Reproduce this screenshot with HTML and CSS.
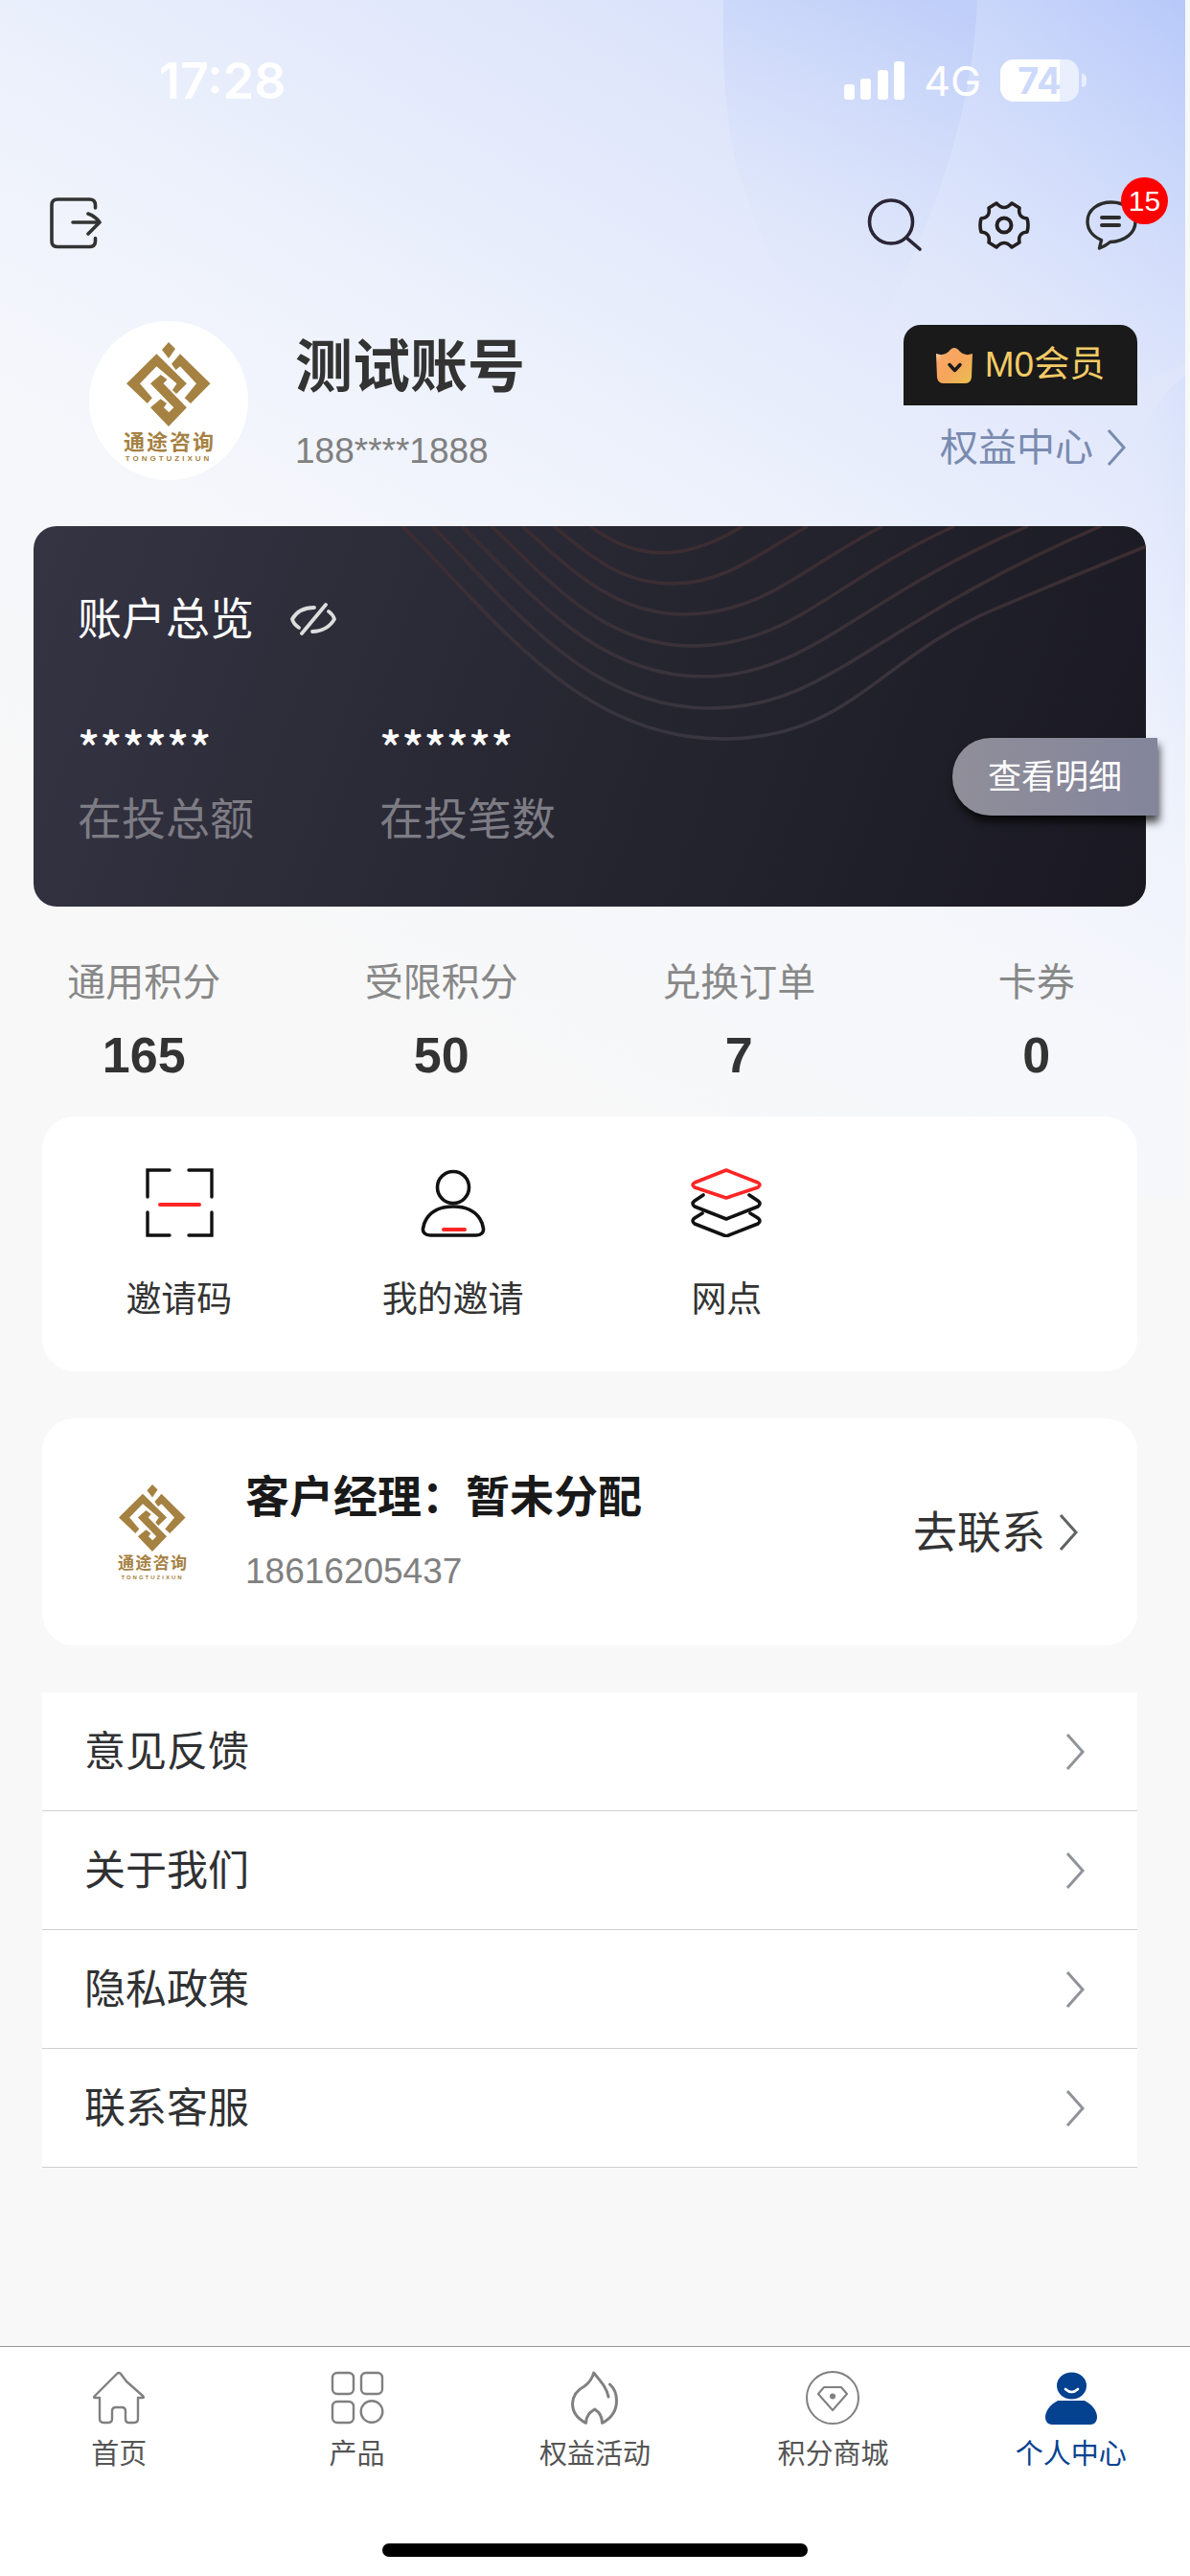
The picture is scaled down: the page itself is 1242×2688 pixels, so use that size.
FILE: index.html
```html
<!DOCTYPE html>
<html lang="zh-CN">
<head>
  <meta charset="UTF-8">
  <meta name="viewport" content="width=device-width, initial-scale=1">
  <title>个人中心</title>
  <link rel="stylesheet" href="styles.css">
</head>
<body>
<svg class="defs" width="0" height="0" aria-hidden="true">
  <defs>
    <symbol id="emblem" viewBox="0 0 88 88">
      <path d="M44 0 51 7 44 17 37 8Z"/>
      <path d="M31.4 12.3 62.9 43.3 52 54 48 50 52.5 43.3 31.4 25.3 14 43.3 26.8 58.3 21.8 64 0 43.3Z"/>
      <path d="M35.7 34 42.5 39 38.6 43.3 62.9 68.3 44 88 25 68.3 35.7 59.3 42 64 39 68.3 44.3 73.3 49.3 68.3 25 43.3Z"/>
      <path d="M56 12.3 87.5 43.3 67 64 60.7 58.3 73 43.3 56 25.3 51.5 29 47 22.7Z"/>
    </symbol>
    <symbol id="chevron" viewBox="0 0 20 38">
      <path d="M2 1 18 19 2 37" fill="none" stroke="currentColor" stroke-width="3"/>
    </symbol>
  </defs>
</svg>

<svg class="backdrop" viewBox="0 0 1237 1250" preserveAspectRatio="none" aria-hidden="true">
  <defs>
    <linearGradient id="lens" x1="0.8" y1="0" x2="0.5" y2="1">
      <stop offset="0" stop-color="#a9bdf6" stop-opacity=".45"/>
      <stop offset="1" stop-color="#dde7fb" stop-opacity="0"/>
    </linearGradient>
    <linearGradient id="corner" x1="1" y1="0" x2="0.3" y2="0.9">
      <stop offset="0" stop-color="#a3b9f8" stop-opacity=".5"/>
      <stop offset="1" stop-color="#e6edfd" stop-opacity="0"/>
    </linearGradient>
    <linearGradient id="side" x1="1" y1="0" x2="0.4" y2="0.6">
      <stop offset="0" stop-color="#cfdcfc" stop-opacity=".5"/>
      <stop offset="1" stop-color="#e6edfd" stop-opacity="0"/>
    </linearGradient>
  </defs>
  <path d="M755 0C753 80 760 160 778 200 800 280 850 340 900 380 960 260 1015 140 1020 0Z" fill="url(#lens)"/>
  <path d="M1020 0C1015 140 965 270 880 400 1000 440 1120 430 1237 380V0Z" fill="url(#corner)"/>
  <path d="M1237 392C1205 415 1190 450 1160 520 1150 700 1190 800 1237 860Z" fill="url(#side)"/>
</svg>

<header class="status-bar">
  <span class="clock">17:28</span>
  <div class="status-right">
    <svg width="63" height="40" viewBox="0 0 63 40" fill="#fff">
      <rect x="0" y="24" width="11" height="16" rx="3"/>
      <rect x="17" y="18" width="11" height="22" rx="3"/>
      <rect x="35" y="9" width="11" height="31" rx="3"/>
      <rect x="52" y="0" width="11" height="40" rx="3"/>
    </svg>
    <span class="network">4G</span>
    <div class="battery"><span>74</span></div>
  </div>
</header>

<div class="toolbar">
  <button class="icon-btn" aria-label="退出">
    <svg width="54" height="54" viewBox="0 0 54 54" fill="none" stroke="#333" stroke-width="3.6" stroke-linecap="round" stroke-linejoin="round">
      <path d="M47.500 11V8Q47.500 2 41.500 2H8Q2 2 2 8V45.500Q2 51.500 8 51.500H41.500Q47.500 51.500 47.500 45.500V42.500M24 26H52M40 17Q48 20 52 26L40 38"/>
    </svg>
  </button>
  <div class="toolbar-right">
    <button class="icon-btn" aria-label="搜索">
      <svg width="58" height="56" viewBox="0 0 58 56" fill="none" stroke="#2b2636" stroke-width="3.6" stroke-linecap="round">
        <circle cx="25" cy="24.500" r="22.500"/>
        <path d="M41 41 55 53"/>
      </svg>
    </button>
    <button class="icon-btn" aria-label="设置">
      <svg width="54" height="50" viewBox="0 0 54 50" fill="none" stroke="#231f20" stroke-width="3.600" stroke-linejoin="round">
        <path d="M19 2Q27 11 35 2L43 7Q41 17 51 18 53 25 51 32 41 33 43 43L35 48Q27 39 19 48L11 43Q13 33 3 32 1 25 3 18 13 17 11 7Z"/>
        <circle cx="27" cy="25" r="7.500" stroke-width="4"/>
      </svg>
    </button>
    <button class="icon-btn" aria-label="消息">
      <svg width="54" height="52" viewBox="0 0 54 52" fill="none" stroke="#2c2c2c" stroke-width="3.4" stroke-linecap="round" stroke-linejoin="round">
        <path d="M25.700 43.500C41 43 52 34 52 22.500 52 11 41 2 27 2 13 2 2 10 2 22 2 31 8 38 16.500 41.500L14.500 50Q20 48 25.700 43.500Z"/>
        <path d="M17 18H35M17 26H35" stroke-width="4"/>
      </svg>
      <span class="badge">15</span>
    </button>
  </div>
</div>

<main>
  <section class="profile">
    <div class="avatar">
      <div class="logo">
        <svg class="logo-mark"><use href="#emblem"/></svg>
        <div class="logo-name">通途咨询</div>
        <div class="logo-latin">TONGTUZIXUN</div>
      </div>
    </div>
    <div class="profile-info">
      <h1>测试账号</h1>
      <p>188****1888</p>
    </div>
    <div class="member">
      <a class="member-level" href="#">
        <svg width="38" height="37" viewBox="0 0 38 37">
          <defs>
            <linearGradient id="crown" x1="0" y1="0" x2="1" y2="1">
              <stop offset="0" stop-color="#fff0dc"/>
              <stop offset=".22" stop-color="#f9a765"/>
              <stop offset=".5" stop-color="#f6a55c"/>
              <stop offset="1" stop-color="#e8c04f"/>
            </linearGradient>
          </defs>
          <path d="M0 6Q8 9 13 4 19-4 25 4 30 9 38 6L37 31Q36 37 30 37H8Q2 37 1 31Z" fill="url(#crown)"/>
          <path d="M14 17.500 19.500 23.500 25 17.500" fill="none" stroke="#1a1a1a" stroke-width="3.500" stroke-linecap="round" stroke-linejoin="round"/>
        </svg>
        <span>M0会员</span>
      </a>
      <a class="member-rights" href="#">权益中心<svg class="chevron"><use href="#chevron"/></svg></a>
    </div>
  </section>

  <section class="account">
    <svg class="account-lines" viewBox="0 0 1161 397" preserveAspectRatio="none" fill="none" stroke="url(#wave)" stroke-width="3.500" aria-hidden="true">
      <defs>
        <linearGradient id="wave" gradientUnits="userSpaceOnUse" x1="0" y1="0" x2="0" y2="222">
          <stop offset="0" stop-color="#3c2c30"/>
          <stop offset="1" stop-color="#393640"/>
        </linearGradient>
      </defs>
      <path d="M581 0C630 37 680 37 740 0"/>
      <path d="M543 0C590 40 620 60 668 60 720 60 755 30 808 0"/>
      <path d="M510 0C565 50 610 92 678 92 760 92 800 45 886 0"/>
      <path d="M478 0C545 65 600 125 686 125 790 125 830 60 961 0"/>
      <path d="M447 0C520 72 590 157 698 157 810 157 860 75 1038 0"/>
      <path d="M416 0C500 85 580 190 706 190 830 190 870 105 1114 0"/>
      <path d="M385 0C480 95 570 222 719 222 850 222 880 140 1000 88Q1080 54 1161 21"/>
    </svg>
    <div class="account-title">
      <h2>账户总览</h2>
      <button class="icon-btn" aria-label="显示金额">
        <svg width="48" height="34" viewBox="0 0 48 34" fill="none" stroke="#ddd" stroke-width="3.800" stroke-linecap="round">
          <path d="M25 5C14 5 6 10 2 17 3 21 6 24 9 26M40 9C43 11 45 14 46 17 42 24 34 30 23 30M12 32 37 2"/>
        </svg>
      </button>
    </div>
    <dl class="account-data">
      <div>
        <dd>******</dd>
        <dt>在投总额</dt>
      </div>
      <div>
        <dd>******</dd>
        <dt>在投笔数</dt>
      </div>
    </dl>
    <button class="account-detail">查看明细</button>
  </section>

  <dl class="points">
    <div>
      <dt>通用积分</dt>
      <dd>165</dd>
    </div>
    <div>
      <dt>受限积分</dt>
      <dd>50</dd>
    </div>
    <div>
      <dt>兑换订单</dt>
      <dd>7</dd>
    </div>
    <div>
      <dt>卡券</dt>
      <dd>0</dd>
    </div>
  </dl>

  <nav class="services">
    <a href="#">
      <svg width="74" height="72" viewBox="0 0 74 72" fill="none" stroke="#111" stroke-width="3.400" stroke-linecap="round">
        <path d="M27 2H4V30M47 2H71V30M4 46V70H27M71 46V70H47"/>
        <path d="M17 38H58" stroke="#ff2525" stroke-width="4"/>
      </svg>
      <span>邀请码</span>
    </a>
    <a href="#">
      <svg width="74" height="72" viewBox="0 0 74 72" fill="none" stroke="#111" stroke-width="3.600" stroke-linecap="round">
        <circle cx="37" cy="20" r="16.500"/>
        <path d="M37 40C52 40 60 45 65 53 67 56 68 60 68.500 63 69 67 66 70 61 70H13C8 70 5 67 5.500 63 6 60 7 56 9 53 14 45 22 40 37 40Z"/>
        <path d="M27 64H49" stroke="#ff2525" stroke-width="4"/>
      </svg>
      <span>我的邀请</span>
    </a>
    <a href="#">
      <svg width="74" height="72" viewBox="0 0 74 72" fill="none" stroke="#111" stroke-width="3.600" stroke-linecap="round" stroke-linejoin="round">
        <path d="M37 2 70 15Q74 17 70 20L37 31 4 20Q0 17 4 15Z" stroke="#ff2525"/>
        <path d="M13 28 4 34Q0 37 4 40L37 53 70 40Q74 37 70 34L61 28"/>
        <path d="M12 47 4 52Q0 55 4 58L37 71 70 58Q74 55 70 52L62 47"/>
      </svg>
      <span>网点</span>
    </a>
  </nav>

  <section class="manager">
    <div class="logo logo-small">
      <svg class="logo-mark"><use href="#emblem"/></svg>
      <div class="logo-name">通途咨询</div>
      <div class="logo-latin">TONGTUZIXUN</div>
    </div>
    <div class="manager-info">
      <h2>客户经理：暂未分配</h2>
      <p>18616205437</p>
    </div>
    <a class="manager-link" href="#">去联系<svg class="chevron"><use href="#chevron"/></svg></a>
  </section>

  <nav class="menu">
    <a href="#">意见反馈<svg class="chevron"><use href="#chevron"/></svg></a>
    <a href="#">关于我们<svg class="chevron"><use href="#chevron"/></svg></a>
    <a href="#">隐私政策<svg class="chevron"><use href="#chevron"/></svg></a>
    <a href="#">联系客服<svg class="chevron"><use href="#chevron"/></svg></a>
  </nav>
</main>

<footer class="tabbar">
  <nav>
    <a href="#">
      <svg width="56" height="56" viewBox="0 0 56 56" fill="none" stroke="#808080" stroke-width="2.400" stroke-linejoin="round">
        <path d="M28 2Q29 2 30 3L36 11 53 26Q55 28 53 28H48V50Q48 54 44 54H38Q35 54 35 50V42Q35 38 31 38H25Q21 38 21 42V50Q21 54 17 54H12Q8 54 8 50V28H3Q1 28 3 26L26 3Q27 2 28 2Z"/>
      </svg>
      <span>首页</span>
    </a>
    <a href="#">
      <svg width="56" height="56" viewBox="0 0 56 56" fill="none" stroke="#808080" stroke-width="2.400">
        <rect x="2" y="2" width="22" height="22" rx="5"/>
        <rect x="32" y="2" width="22" height="22" rx="5"/>
        <rect x="2" y="32" width="22" height="22" rx="5"/>
        <circle cx="43" cy="42.500" r="11.300"/>
      </svg>
      <span>产品</span>
    </a>
    <a href="#">
      <svg width="56" height="56" viewBox="0 0 56 56" fill="none" stroke="#808080" stroke-width="3" stroke-linecap="round" stroke-linejoin="round">
        <path d="M42 27C40 17 34 11 26.700 2 25 9 21 13 17 16 9 20 5 25 4.500 34 4.500 43 10 50 18.500 54.300 19 46 23 43 27.700 40 32 43 35 46 35.500 54.300 44 50 50.500 42 50.500 31 50.500 23 48 18 43.500 14"/>
      </svg>
      <span>权益活动</span>
    </a>
    <a href="#">
      <svg width="56" height="56" viewBox="0 0 56 56" fill="none" stroke="#808080" stroke-width="2" stroke-linejoin="round">
        <circle cx="28" cy="28" r="27"/>
        <path d="M19 17H37L43 24 28 41 13 24Z"/>
        <circle cx="28" cy="26.500" r="3" fill="#808080" stroke="none"/>
      </svg>
      <span>积分商城</span>
    </a>
    <a class="active" href="#">
      <svg width="56" height="56" viewBox="0 0 56 56" fill="#04428f">
        <ellipse cx="28.500" cy="15.500" rx="15.500" ry="14"/>
        <path d="M14 31H42C50 35 55 42 55 48 55 53 52 56 48 56H8C4 56 1 53 1 48 1 42 6 35 14 31Z"/>
        <path d="M22 19Q28.500 25 35 19" fill="none" stroke="#fff" stroke-width="2.600" stroke-linecap="round"/>
      </svg>
      <span>个人中心</span>
    </a>
  </nav>
  <div class="home-indicator"></div>
</footer>
</body>
</html>
```

FILE: styles.css
```css
* {
  box-sizing: border-box;
}

body {
  position: relative;
  display: flex;
  flex-direction: column;
  min-height: 100vh;
  margin: 0;
  background: #f8f8f8;
  color: #333;
  font-family: "Liberation Sans", "Noto Sans CJK SC", sans-serif;
}

h1, h2, p, dl, dd {
  margin: 0;
}

a {
  color: inherit;
  text-decoration: none;
}

.defs {
  position: absolute;
}

.backdrop {
  position: absolute;
  z-index: -1;
  top: 0;
  left: 0;
  width: calc(100% - 5px);
  height: 1250px;
  background: linear-gradient(210deg, #cbd8fb 0%, #e0e7fb 22%, #eef2fc 42%, #f5f7fb 58%, #f8f8f8 80%);
}

.icon-btn {
  position: relative;
  display: flex;
  padding: 0;
  border: 0;
  background: none;
}

.chevron {
  width: 20px;
  height: 38px;
}

/* status bar */
.status-bar {
  display: flex;
  align-items: center;
  justify-content: space-between;
  height: 168px;
  padding: 0 116px 0 166px;
  color: #fff;
  font-family: Inter, sans-serif;
}

.clock {
  font-size: 52px;
  font-weight: 600;
}

.status-right {
  display: flex;
  align-items: center;
  gap: 20px;
}

.network {
  font-size: 43px;
}

.battery {
  position: relative;
  width: 82px;
  height: 44px;
  border-radius: 14px;
  background: linear-gradient(90deg, #fff 75%, #e9effd 75%);
  color: #cdd9fa;
  font-size: 38px;
  font-weight: 700;
  line-height: 44px;
  text-align: center;
}

.battery::after {
  content: "";
  position: absolute;
  top: 15px;
  right: -8px;
  width: 5px;
  height: 14px;
  border-radius: 0 5px 5px 0;
  background: #e9effd;
}

/* toolbar */
.toolbar {
  display: flex;
  align-items: center;
  justify-content: space-between;
  height: 130px;
  padding: 0 55px 0 52px;
}

.toolbar-right {
  display: flex;
  align-items: center;
  gap: 58px;
  padding-top: 4px;
}

.badge {
  position: absolute;
  top: -24px;
  right: -32px;
  width: 49px;
  height: 49px;
  border-radius: 50%;
  background: #f00;
  color: #fff;
  font-size: 30px;
  line-height: 49px;
  text-align: center;
}

/* profile */
.profile {
  display: flex;
  padding: 37px 55px 48px 93px;
}

.avatar {
  display: flex;
  justify-content: center;
  width: 166px;
  height: 166px;
  padding-top: 22px;
  border-radius: 50%;
  background: #fff;
}

.logo {
  display: flex;
  flex-direction: column;
  align-items: center;
  width: 94px;
  color: #a58142;
}

.logo-mark {
  width: 88px;
  height: 88px;
  fill: #a58142;
}

.logo-name {
  width: 100%;
  margin-top: 4px;
  font-size: 22px;
  font-weight: 700;
  line-height: 26px;
  text-align-last: justify;
}

.logo-latin {
  display: flex;
  font-size: 8px;
  font-weight: 700;
  line-height: 8px;
  letter-spacing: 3px;
}

.logo-small {
  width: 72px;
}

.logo-small .logo-mark {
  width: 70px;
  height: 70px;
}

.logo-small .logo-name {
  margin-top: 2px;
  font-size: 17px;
  line-height: 22px;
}

.logo-small .logo-latin {
  font-size: 6px;
  line-height: 6px;
  letter-spacing: 2px;
}

.profile-info {
  flex: 1;
  padding: 14px 0 0 49px;
}

.profile-info h1 {
  font-size: 60px;
  line-height: 70px;
}

.profile-info p,
.manager-info p {
  color: #808080;
  font-size: 37px;
  line-height: 48px;
}

.profile-info p {
  margin-top: 28px;
}

.member {
  display: flex;
  flex-direction: column;
  align-items: flex-end;
  padding-top: 4px;
}

.member-level {
  display: flex;
  align-items: center;
  justify-content: center;
  gap: 13px;
  width: 244px;
  height: 84px;
  border-radius: 18px 18px 0 0;
  background: #1a1a1a;
  color: #f3cb66;
  font-size: 37px;
  line-height: 84px;
}

.member-rights {
  display: flex;
  align-items: center;
  gap: 14px;
  margin-top: 19px;
  padding-right: 12px;
  color: #7a8bb0;
  font-size: 40px;
  line-height: 50px;
}

/* account card */
.account {
  position: relative;
  margin: 0 46px 0 35px;
  padding: 67px 46px 65px;
  border-radius: 24px;
  background: linear-gradient(110deg, #353443 0%, #252530 55%, #1a1922 100%);
  color: #fff;
}

.account-lines {
  position: absolute;
  top: 0;
  left: 0;
  width: 100%;
  height: 100%;
  border-radius: 24px;
}

.account-title {
  position: relative;
  display: flex;
  align-items: center;
  gap: 38px;
}

.account-title h2 {
  font-size: 46px;
  font-weight: 400;
  line-height: 60px;
}

.account-data {
  position: relative;
  display: flex;
  margin-top: 72px;
  font-family: "Noto Sans CJK SC", sans-serif;
  font-size: 46px;
  line-height: 60px;
}

.account-data > div {
  display: flex;
  flex-direction: column;
  gap: 13px;
  width: 315px;
}

.account-data dd {
  font-size: 48px;
  font-weight: 500;
}

.account-data dt {
  color: #7d7c84;
}

.account-detail {
  position: absolute;
  top: 221px;
  right: -12px;
  width: 214px;
  height: 81px;
  padding: 0;
  border: 0;
  border-radius: 40px 0 0 40px;
  background: linear-gradient(90deg, #908e99, #83859c);
  box-shadow: 2px 7px 8px rgba(0, 0, 0, 0.7);
  color: #fff;
  font-family: inherit;
  font-size: 35px;
  line-height: 50px;
}

/* points */
.points {
  display: grid;
  grid-template-columns: repeat(4, 1fr);
  margin: 51px 5px 0 -5px;
  text-align: center;
}

.points dt {
  color: #888;
  font-size: 40px;
  line-height: 56px;
}

.points dd {
  margin: 17px 0 33px;
  font-size: 52px;
  font-weight: 700;
  line-height: 62px;
}

/* cards */
.services,
.manager {
  margin: 0 55px 49px 44px;
  border-radius: 34px;
  background: #fff;
}

.services {
  display: grid;
  grid-template-columns: repeat(4, 1fr);
  padding: 54px 0 50px;
}

.services a {
  display: flex;
  flex-direction: column;
  align-items: center;
  gap: 42px;
  font-size: 37px;
  line-height: 48px;
}

.manager {
  display: flex;
  align-items: center;
  height: 237px;
  padding: 0 62px 0 79px;
}

.manager-info {
  flex: 1;
  padding-left: 61px;
}

.manager-info h2 {
  margin-bottom: 26px;
  color: #191919;
  font-size: 46px;
  line-height: 56px;
}

.manager-link {
  display: flex;
  align-items: center;
  gap: 14px;
  font-size: 46px;
  line-height: 60px;
}

.manager-link .chevron {
  color: #606266;
}

/* menu */
.menu {
  margin: 0 55px 0 44px;
  background: #fff;
}

.menu a {
  display: flex;
  align-items: center;
  justify-content: space-between;
  height: 124px;
  padding: 0 55px 0 44px;
  border-bottom: 1px solid #d0d0d0;
  color: #303133;
  font-size: 43px;
  line-height: 60px;
}

.menu .chevron {
  color: #909399;
}

/* tab bar */
.tabbar {
  margin-top: auto;
  border-top: 1px solid #999;
  background: #fff;
}

.tabbar nav {
  display: grid;
  grid-template-columns: repeat(5, 1fr);
  padding-top: 25px;
}

.tabbar a {
  display: flex;
  flex-direction: column;
  align-items: center;
  gap: 13px;
  color: #555;
  font-size: 29px;
  line-height: 36px;
}

.tabbar .active {
  color: #04428f;
}

.home-indicator {
  width: 444px;
  height: 14px;
  margin: 75px auto 20px;
  border-radius: 7px;
  background: #000;
}
```
